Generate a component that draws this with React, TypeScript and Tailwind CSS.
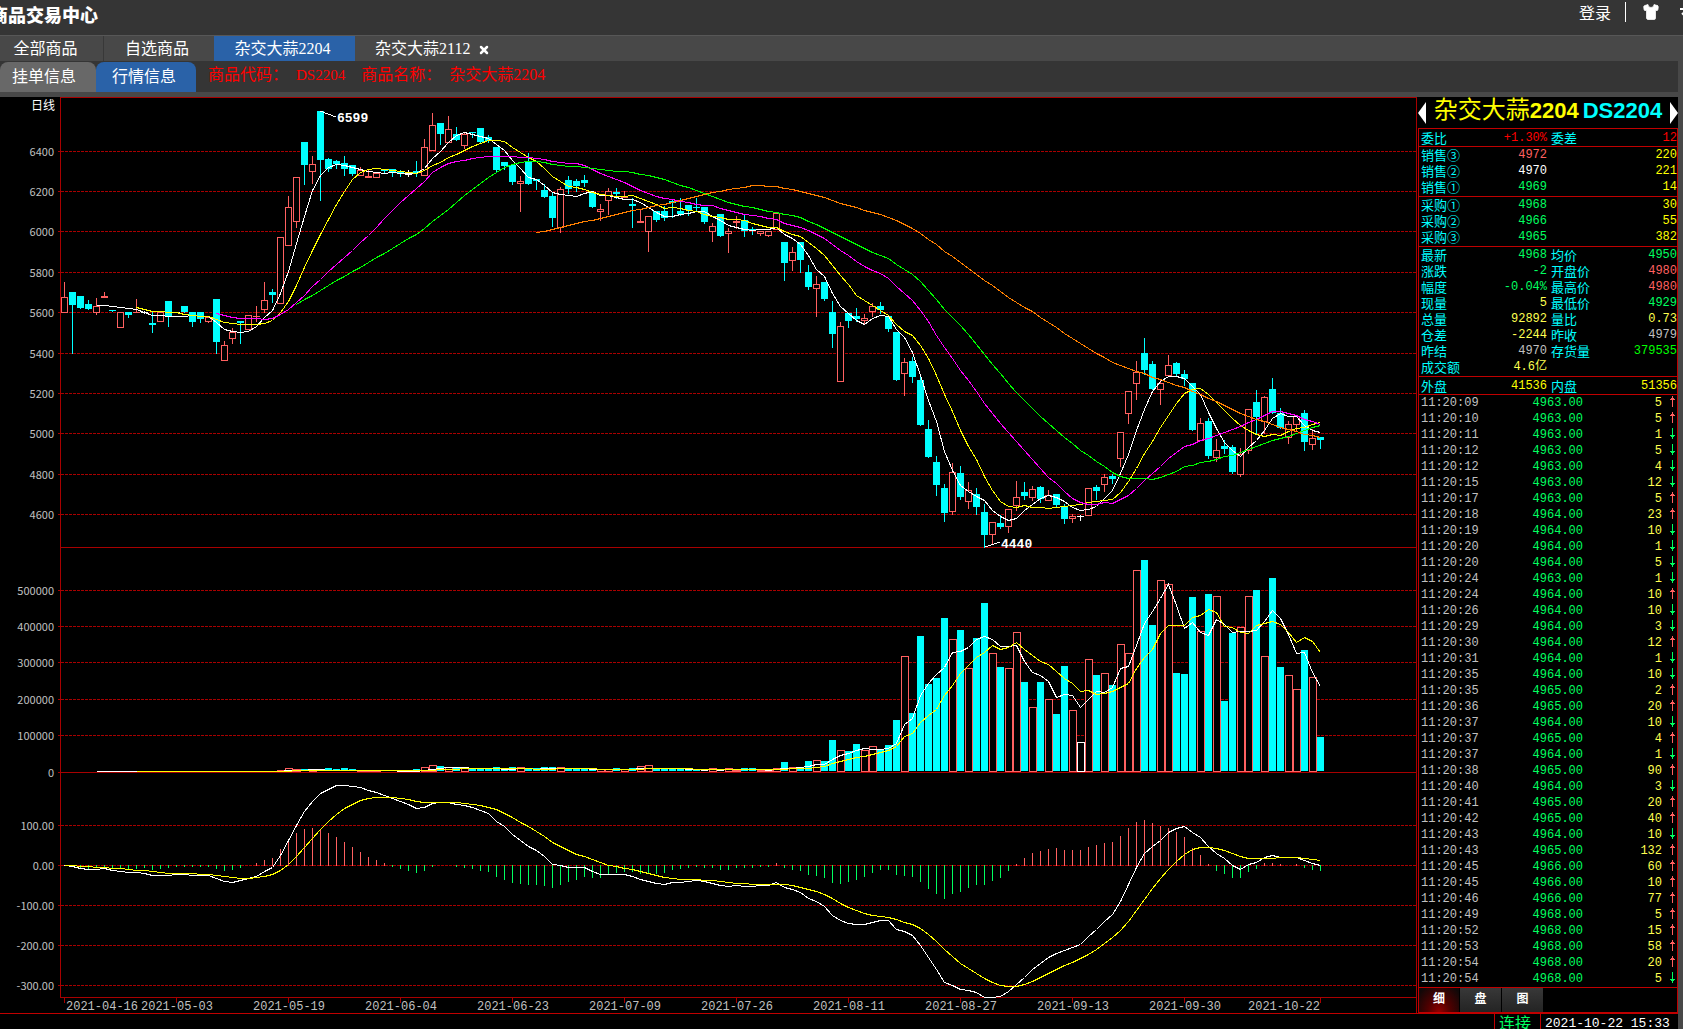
import { Shirt, X } from "lucide-react";
import clsx from "clsx";

const SANS = "font-['Noto_Sans_CJK_SC',sans-serif]";
const SONG = "font-['Liberation_Serif','Noto_Sans_CJK_SC',serif]";
const MONO = "font-['Liberation_Mono','Noto_Sans_CJK_SC',monospace]";

type Kind = "u" | "d" | "w";
// kind (up, down, flat), body top, body bottom, high, low
type Candle = [Kind, number, number, number, number];

const CANDLES: Candle[] = [
  ["u", 297, 313, 282, 313], ["d", 292, 305, 292, 354], ["d", 296, 308, 296, 309], ["d", 304, 309, 300, 310],
  ["u", 306, 313, 298, 315], ["u", 296, 298, 292, 298], ["d", 310, 311, 310, 312], ["u", 312, 328, 312, 328],
  ["d", 312, 315, 312, 318], ["u", 312, 313, 299, 313], ["w", 312, 313, 311, 314], ["d", 323, 325, 312, 333],
  ["u", 312, 322, 312, 322], ["d", 301, 317, 301, 327], ["w", 312, 313, 312, 313], ["d", 306, 312, 306, 313],
  ["d", 312, 322, 312, 327], ["d", 312, 319, 312, 323], ["u", 317, 322, 317, 323], ["d", 299, 342, 299, 354],
  ["u", 345, 361, 341, 361], ["u", 332, 339, 328, 344], ["d", 321, 323, 321, 344], ["u", 315, 330, 315, 330],
  ["u", 316, 317, 306, 322], ["u", 300, 310, 282, 313], ["d", 292, 295, 289, 303], ["u", 237, 304, 237, 304],
  ["u", 207, 246, 196, 246], ["u", 177, 222, 177, 228], ["d", 142, 165, 142, 185], ["u", 164, 172, 156, 184],
  ["d", 111, 160, 111, 201], ["d", 159, 169, 158, 172], ["d", 161, 164, 160, 169], ["d", 163, 169, 156, 176],
  ["d", 165, 174, 165, 176], ["u", 170, 176, 167, 176], ["u", 176, 178, 170, 178], ["u", 173, 178, 173, 178],
  ["d", 169, 171, 169, 173], ["d", 169, 172, 169, 177], ["d", 171, 173, 170, 177], ["w", 174, 175, 170, 177],
  ["d", 171, 173, 161, 177], ["u", 147, 176, 139, 176], ["u", 125, 151, 113, 151], ["d", 123, 134, 123, 145],
  ["u", 129, 143, 116, 143], ["d", 134, 140, 127, 141], ["u", 134, 146, 132, 149], ["d", 132, 133, 132, 138],
  ["d", 128, 142, 128, 143], ["d", 137, 141, 135, 143], ["d", 147, 170, 147, 172], ["d", 162, 166, 162, 170],
  ["d", 165, 182, 165, 185], ["u", 181, 184, 176, 212], ["d", 161, 184, 153, 185], ["d", 179, 181, 179, 190],
  ["d", 190, 197, 184, 198], ["d", 196, 218, 192, 227], ["u", 189, 228, 187, 233], ["d", 180, 189, 176, 194],
  ["d", 181, 186, 179, 192], ["d", 180, 183, 175, 187], ["d", 192, 207, 192, 208], ["u", 209, 212, 204, 221],
  ["u", 191, 201, 188, 215], ["d", 192, 194, 188, 199], ["u", 196, 198, 191, 198], ["d", 204, 206, 198, 228],
  ["u", 221, 223, 210, 223], ["u", 216, 232, 216, 252], ["d", 211, 220, 211, 222], ["d", 211, 218, 206, 221],
  ["d", 201, 203, 200, 218], ["d", 211, 214, 198, 216], ["d", 205, 210, 205, 216], ["d", 207, 208, 198, 211],
  ["d", 207, 222, 207, 224], ["u", 226, 232, 223, 242], ["d", 214, 236, 214, 237], ["u", 231, 234, 228, 253],
  ["u", 221, 223, 216, 229], ["d", 220, 231, 214, 237], ["d", 229, 230, 227, 235], ["u", 231, 234, 231, 236],
  ["u", 231, 236, 231, 237], ["u", 213, 230, 213, 230], ["d", 242, 263, 242, 281], ["u", 252, 261, 247, 271],
  ["d", 242, 260, 242, 273], ["d", 272, 287, 265, 290], ["u", 284, 289, 276, 317], ["d", 282, 299, 282, 301],
  ["d", 312, 334, 301, 348], ["u", 326, 382, 322, 382], ["d", 313, 321, 313, 328], ["d", 316, 319, 308, 322],
  ["u", 318, 321, 314, 324], ["u", 306, 312, 303, 317], ["d", 306, 310, 302, 314], ["d", 316, 329, 316, 332],
  ["d", 332, 380, 332, 381], ["u", 362, 374, 358, 396], ["d", 361, 377, 357, 383], ["d", 380, 425, 376, 426],
  ["d", 429, 457, 420, 458], ["d", 462, 485, 456, 496], ["d", 488, 513, 484, 522], ["u", 472, 512, 463, 515],
  ["d", 473, 497, 466, 500], ["u", 490, 502, 482, 509], ["d", 494, 507, 488, 515], ["d", 512, 535, 504, 548],
  ["u", 522, 535, 522, 545], ["d", 523, 527, 515, 529], ["u", 509, 527, 509, 533], ["u", 497, 506, 481, 511],
  ["d", 492, 496, 482, 500], ["u", 489, 498, 486, 501], ["d", 487, 499, 486, 503], ["u", 495, 501, 490, 501],
  ["d", 494, 505, 494, 507], ["d", 506, 519, 504, 524], ["u", 516, 519, 514, 523], ["w", 516, 517, 515, 521],
  ["u", 488, 516, 488, 516], ["d", 487, 491, 485, 500], ["u", 477, 485, 474, 492], ["d", 476, 479, 474, 484],
  ["u", 432, 459, 432, 467], ["u", 391, 414, 391, 424], ["u", 372, 384, 361, 400], ["d", 353, 370, 338, 375],
  ["d", 364, 389, 361, 390], ["u", 383, 390, 379, 405], ["u", 365, 376, 355, 376], ["d", 363, 374, 362, 376],
  ["d", 374, 379, 370, 386], ["d", 383, 430, 383, 431], ["u", 423, 441, 418, 441], ["d", 421, 456, 418, 459],
  ["u", 450, 458, 439, 462], ["d", 446, 449, 440, 454], ["d", 447, 472, 445, 474], ["u", 454, 475, 448, 477],
  ["u", 409, 451, 409, 454], ["d", 402, 417, 390, 434], ["u", 397, 422, 396, 434], ["d", 389, 413, 378, 414],
  ["d", 413, 428, 408, 429], ["u", 424, 438, 421, 444], ["u", 416, 425, 415, 432], ["d", 413, 442, 410, 451],
  ["u", 438, 445, 429, 450], ["d", 437, 440, 437, 449],
];

const VOLUMES = [
  1, 1, 1, 1, 1, 1, 1, 1, 1, 1, 1, 1, 1, 1, 1, 1, 1, 1, 1, 1, 1, 1, 1, 1, 1, 1, 1, 2, 4, 3,
  2, 2, 2, 3, 2, 3, 2, 2, 2, 2, 1, 1, 1, 1, 2, 5, 7, 5, 5, 4, 5, 3, 3, 3, 4, 2, 4, 5, 3, 3,
  4, 4, 5, 3, 3, 3, 3, 3, 3, 3, 3, 3, 6, 7, 3, 3, 3, 3, 2, 2, 2, 4, 2, 4, 2, 3, 3, 2, 2, 4,
  9, 5, 4, 10, 12, 10, 31, 22, 20, 27, 22, 26, 21, 26, 51, 116, 58, 135, 87, 93, 153, 133, 141, 104, 133,
  168, 119, 104, 104, 140, 89, 65, 89, 73, 57, 105, 62, 30, 113, 96, 99, 86, 128, 119, 202, 211, 146, 192,
  188, 98, 97, 174, 141, 177, 176, 70, 138, 145, 176, 181, 116, 193, 104, 97, 83, 121, 95, 34,
];

const PRICE_GRID: [number, string][] = [
  [151, "6400"], [191, "6200"], [231, "6000"], [272, "5800"], [312, "5600"],
  [353, "5400"], [393, "5200"], [433, "5000"], [474, "4800"], [514, "4600"],
];
const VOLUME_GRID: [number, string][] = [
  [590, "500000"], [626, "400000"], [662, "300000"], [699, "200000"], [735, "100000"],
];
const MACD_GRID: [number, string][] = [
  [825, "100.00"], [865, "0.00"], [905, "-100.00"], [945, "-200.00"], [985, "-300.00"],
];
const DATES: [number, string][] = [
  [14, "2021-05-03"], [28, "2021-05-19"], [42, "2021-06-04"], [56, "2021-06-23"], [70, "2021-07-09"],
  [84, "2021-07-26"], [98, "2021-08-11"], [112, "2021-08-27"], [126, "2021-09-13"], [140, "2021-09-30"],
];

const COLORS: Record<Kind, string> = { u: "#ff6060", d: "#00ffff", w: "#ffffff" };
const LINE = "#a80000";
const CHART_TOP = 97;
const VOLUME_BASE = 772;
const MACD_ZERO = 865;
// the MACD pane has about twice the pixels per yuan of the price pane
const MACD_SCALE = 1.983;

const cx = (i: number) => 64 + i * 8;
const closes = CANDLES.map(([kind, top, bottom]) => (kind === "d" ? bottom : top));

function average(values: number[], size: number) {
  return values
    .map((_, i) => {
      if (i < size - 1) return null;
      const sum = values.slice(i - size + 1, i + 1).reduce((a, b) => a + b, 0);
      return [i, sum / size] as const;
    })
    .filter((p) => p !== null);
}

function ema(values: number[], size: number) {
  const k = 2 / (size + 1);
  const out = [values[0]];
  for (let i = 1; i < values.length; i++) out.push(values[i] * k + out[i - 1] * (1 - k));
  return out;
}

// screen y grows downwards, so the closes are negated before the MACD
const rising = closes.map((y) => -y * MACD_SCALE);
const slow = ema(rising, 26);
const dif = ema(rising, 12).map((v, i) => v - slow[i]);
const dea = ema(dif, 9);

function Curve({ points, color }: { points: (readonly [number, number])[]; color: string }) {
  return (
    <polyline
      points={points.map(([i, y]) => `${cx(i) + 0.5},${Math.round(y) + 0.5}`).join(" ")}
      fill="none"
      stroke={color}
    />
  );
}

function Grid({ rows }: { rows: [number, string][] }) {
  return (
    <>
      {rows.map(([y, label]) => (
        <g key={label}>
          <line x1="58" x2="61" y1={y + 0.5} y2={y + 0.5} stroke={LINE} />
          <line x1="61" x2="100%" y1={y + 0.5} y2={y + 0.5} stroke={LINE} strokeDasharray="3 1" />
          <text x="54" y={y + 5} textAnchor="end" fontSize="11" fill="#c0c0c0">
            {label}
          </text>
        </g>
      ))}
    </>
  );
}

function CandleShape({ candle, index }: { candle: Candle; index: number }) {
  const [kind, top, bottom, high, low] = candle;
  const x = cx(index);
  const color = COLORS[kind];
  return (
    <g>
      <line x1={x + 0.5} x2={x + 0.5} y1={high} y2={low} stroke={color} />
      {kind === "u" && bottom - top > 2 ? (
        <rect x={x - 2.5} y={top + 0.5} width="6" height={bottom - top - 1} fill="#000000" stroke={color} />
      ) : (
        <rect x={x - 3} y={top} width="7" height={bottom - top} fill={color} />
      )}
    </g>
  );
}

function VolumeBar({ height, kind, index }: { height: number; kind: Kind; index: number }) {
  if (height < 2) return null;
  const x = cx(index);
  if (kind === "d") {
    return <rect x={x - 3} y={VOLUME_BASE - height - 1} width="7" height={height} fill={COLORS.d} />;
  }
  return (
    <rect
      x={x - 2.5}
      y={VOLUME_BASE - height + 0.5}
      width="7"
      height={height - 1}
      fill="#000000"
      stroke={COLORS[kind]}
    />
  );
}

function Chart() {
  const lineY = (values: number[], base: number) => values.map((v, i) => [i, base - v] as const);
  return (
    <svg className={clsx("block h-[916px] w-full bg-black", SANS)} shapeRendering="crispEdges" role="img" aria-label="日线">
      <g transform={`translate(0 ${-CHART_TOP})`}>
        <text x="55" y="110" textAnchor="end" fontSize="12" fill="#ffffff">
          日线
        </text>
        <Grid rows={PRICE_GRID} />
        <Grid rows={VOLUME_GRID} />
        <Grid rows={MACD_GRID} />

        {/* Pane frames */}
        <line x1="60" x2="100%" y1="97.5" y2="97.5" stroke={LINE} />
        <line x1="60" x2="100%" y1="547.5" y2="547.5" stroke={LINE} />
        <line x1="58" x2="100%" y1="772.5" y2="772.5" stroke={LINE} />
        <line x1="60" x2="100%" y1="997.5" y2="997.5" stroke={LINE} />
        <line x1="60.5" x2="60.5" y1="97" y2="998" stroke={LINE} />
        <text x="54" y="777" textAnchor="end" fontSize="11" fill="#c0c0c0">
          0
        </text>

        {/* Price */}
        {CANDLES.map((candle, i) => (
          <CandleShape key={i} candle={candle} index={i} />
        ))}
        <Curve points={average(closes, 5)} color="#ffffff" />
        <Curve points={average(closes, 10)} color="#ffff00" />
        <Curve points={average(closes, 20)} color="#ff00ff" />
        <Curve points={average(closes, 30)} color="#00ff00" />
        <Curve points={average(closes, 60)} color="#ff8000" />
        <polyline points="320,111 336,117" fill="none" stroke="#ffffff" />
        <polyline points="985,547 1000,542" fill="none" stroke="#ffffff" />
        <g className={MONO} fontSize="13" fontWeight="700" fill="#ffffff">
          <text x="337" y="122">6599</text>
          <text x="1001" y="548">4440</text>
        </g>

        {/* Volume */}
        {VOLUMES.map((height, i) => (
          <VolumeBar key={i} height={height} kind={CANDLES[i][0]} index={i} />
        ))}
        <Curve points={average(VOLUMES.map((v) => VOLUME_BASE - v), 5)} color="#ffffff" />
        <Curve points={average(VOLUMES.map((v) => VOLUME_BASE - v), 10)} color="#ffff00" />

        {/* MACD */}
        {dif.map((value, i) => {
          const height = Math.round(Math.abs(value - dea[i]));
          if (height < 1) return null;
          const up = value > dea[i];
          return (
            <rect
              key={i}
              x={cx(i)}
              y={up ? MACD_ZERO - height : MACD_ZERO}
              width="1"
              height={height + 1}
              fill={up ? "#ff6060" : "#00ff60"}
            />
          );
        })}
        <Curve points={lineY(dif, MACD_ZERO)} color="#ffffff" />
        <Curve points={lineY(dea, MACD_ZERO)} color="#ffff00" />

        {/* Dates */}
        <g className={MONO} fontSize="12" fill="#c0c0c0">
          {[0, ...DATES.map(([i]) => i), 157].map((i) => (
            <line key={i} x1={cx(i) + 0.5} x2={cx(i) + 0.5} y1="998" y2="1003" stroke={LINE} />
          ))}
          <text x="66" y="1010">2021-04-16</text>
          {DATES.map(([i, label]) => (
            <text key={label} x={cx(i) + 1} y="1010" textAnchor="middle">
              {label}
            </text>
          ))}
          <text x="1320" y="1010" textAnchor="end">2021-10-22</text>
        </g>
      </g>
    </svg>
  );
}

const RED = "text-[#ff6060]";
const GREEN = "text-[#00ff60]";
const YELLOW = "text-[#ffff50]";
const GRAY = "text-[#c0c0c0]";
const WHITE = "text-white";

// label, value, value colour, second label, second value, its colour
type QuoteRow = [string, string, string, string, string, string];

const QUOTES: QuoteRow[][] = [
  [["委比", "+1.30%", "text-[#ff0000]", "委差", "12", "text-[#ff0000]"]],
  [
    ["销售③", "4972", RED, "", "220", "text-[#ffff00]"],
    ["销售②", "4970", WHITE, "", "221", "text-[#ffff00]"],
    ["销售①", "4969", GREEN, "", "14", "text-[#ffff00]"],
  ],
  [
    ["采购①", "4968", GREEN, "", "30", "text-[#ffff00]"],
    ["采购②", "4966", GREEN, "", "55", "text-[#ffff00]"],
    ["采购③", "4965", GREEN, "", "382", "text-[#ffff00]"],
  ],
  [
    ["最新", "4968", GREEN, "均价", "4950", GREEN],
    ["涨跌", "-2", GREEN, "开盘价", "4980", RED],
    ["幅度", "-0.04%", GREEN, "最高价", "4980", RED],
    ["现量", "5", YELLOW, "最低价", "4929", GREEN],
    ["总量", "92892", YELLOW, "量比", "0.73", YELLOW],
    ["仓差", "-2244", YELLOW, "昨收", "4979", GRAY],
    ["昨结", "4970", GRAY, "存货量", "379535", "text-[#00ff00]"],
    ["成交额", "4.6亿", YELLOW, "", "", YELLOW],
  ],
  [["外盘", "41536", "text-[#ffff00]", "内盘", "51356", "text-[#ffff00]"]],
];

// seconds after 11:20, price, volume, rising
const TRADES: [string, number, number, boolean][] = [
  ["09", 4963, 5, true], ["10", 4963, 5, true], ["11", 4963, 1, false], ["12", 4963, 5, false],
  ["12", 4963, 4, false], ["15", 4963, 12, false], ["17", 4963, 5, true], ["18", 4964, 23, true],
  ["19", 4964, 10, false], ["20", 4964, 1, false], ["20", 4964, 5, false], ["24", 4963, 1, false],
  ["24", 4964, 10, true], ["26", 4964, 10, false], ["29", 4964, 3, false], ["30", 4964, 12, true],
  ["31", 4964, 1, false], ["35", 4964, 10, false], ["35", 4965, 2, true], ["36", 4965, 20, true],
  ["37", 4964, 10, false], ["37", 4965, 4, true], ["37", 4964, 1, false], ["38", 4965, 90, true],
  ["40", 4964, 3, false], ["41", 4965, 20, true], ["42", 4965, 40, true], ["43", 4964, 10, false],
  ["43", 4965, 132, true], ["45", 4966, 60, true], ["45", 4966, 10, true], ["46", 4966, 77, true],
  ["49", 4968, 5, true], ["52", 4968, 15, true], ["53", 4968, 58, true], ["54", 4968, 20, true],
  ["54", 4968, 5, false],
];

function TradeArrow({ up }: { up: boolean }) {
  return (
    <svg width="5" height="14" className="ml-auto block" shapeRendering="crispEdges" fill={up ? "#ff6060" : "#00ff60"}>
      {up ? (
        <path d="M2 0h1v11h-1zM1 2h3v1h-3zM0 3h5v1h-5z" />
      ) : (
        <path d="M2 0h1v11h-1zM1 8h3v1h-3zM0 7h5v1h-5z" />
      )}
    </svg>
  );
}

function QuoteSection({ rows }: { rows: QuoteRow[] }) {
  return (
    <div className={clsx("border-t border-[#c00000]", rows.length > 1 && "pb-px")}>
      <table className="w-full table-fixed text-xs">
        <tbody>
          {rows.map(([label, value, color, label2, value2, color2]) => (
            <tr key={label} className={rows.length === 1 ? "h-[17px]" : "h-4"}>
              <th className={clsx("w-[50px] whitespace-nowrap p-0 pl-0.5 text-left text-[13px] leading-4 font-normal text-[#00ffff]", SANS)}>
                {label}
              </th>
              <td className={clsx("w-[78px] p-0 text-right leading-4", color)}>{value}</td>
              <th className={clsx("w-[46px] whitespace-nowrap p-0 pl-1 text-left text-[13px] leading-4 font-normal text-[#00ffff]", SANS)}>
                {label2}
              </th>
              <td className={clsx("p-0 text-right leading-4", color2)}>{value2}</td>
            </tr>
          ))}
        </tbody>
      </table>
    </div>
  );
}

function QuotePanel() {
  return (
    <aside className={clsx("flex w-[260px] shrink-0 flex-col bg-black", MONO)}>
      <div className="flex h-[31px] items-center justify-between font-['Liberation_Sans','Noto_Sans_CJK_SC',sans-serif]">
        <button aria-label="上一个">
          <svg width="8" height="22" fill="#ffffff">
            <path d="M8 0v22L0 11z" />
          </svg>
        </button>
        <h1 className="flex items-center gap-1 whitespace-nowrap pb-1 text-[22px] leading-6 font-bold">
          <span className="text-[#ffff00]">
            <span className="text-2xl leading-6 font-normal">杂交大蒜</span>2204
          </span>
          <span className="text-[#00ffff]">DS2204</span>
        </h1>
        <button aria-label="下一个">
          <svg width="8" height="22" fill="#ffffff">
            <path d="M0 0v22l8-11z" />
          </svg>
        </button>
      </div>

      <div className="flex flex-1 flex-col border-x border-b border-[#c00000]">
        {QUOTES.map((rows) => (
          <QuoteSection key={rows[0][0]} rows={rows} />
        ))}

        <div className="border-y border-[#c00000]">
          <table className="w-full table-fixed text-xs">
            <tbody>
              {TRADES.map(([second, price, volume, up], i) => (
                <tr key={i} className="h-4">
                  <td className={clsx("w-20 p-0 pl-0.5 leading-4", GRAY)}>11:20:{second}</td>
                  <td className={clsx("w-[84px] p-0 text-right leading-4", GREEN)}>{price}.00</td>
                  <td className={clsx("w-[79px] p-0 text-right leading-4", YELLOW)}>{volume}</td>
                  <td className="p-0 pr-0.5">
                    <TradeArrow up={up} />
                  </td>
                </tr>
              ))}
            </tbody>
          </table>
        </div>

        <div className={clsx("flex flex-1 gap-px text-xs font-bold text-white", SANS)}>
          <button className="w-10 bg-[radial-gradient(ellipse_at_bottom,#900000_0%,#500000_40%,#100808_90%)] pb-1">细</button>
          <button className="w-[41px] bg-gradient-to-b from-[#383838] to-[#242424] pb-1">盘</button>
          <button className="w-[41px] bg-gradient-to-b from-[#383838] to-[#242424] pb-1">图</button>
        </div>
      </div>
    </aside>
  );
}

function Header() {
  return (
    <header className="flex h-9 shrink-0 items-start justify-between overflow-hidden border-b border-[#575757] bg-[#353535] text-white">
      <div className={clsx("-ml-[10px] pt-0.5 text-lg leading-6 font-black", SANS)}>商品交易中心</div>
      <div className="flex items-center pt-px">
        <button className={clsx("text-base leading-[22px]", SANS)}>登录</button>
        <span className="ml-3.5 h-5 w-px bg-white" />
        <button aria-label="换肤" className="ml-4">
          <Shirt className="h-[18px] w-[18px]" fill="#ffffff" strokeWidth={1} />
        </button>
        <button aria-label="菜单" className="ml-5 w-[3px] overflow-hidden">
          <svg width="16" height="16" fill="none" stroke="#ffffff" strokeWidth="2">
            <path d="M0 5h12M2 9l3 3 3-3" />
          </svg>
        </button>
      </div>
    </header>
  );
}

function Tabs() {
  return (
    <nav className={clsx("flex h-[25px] shrink-0 bg-[#484848] text-base leading-[25px] text-white", SONG)}>
      <button className="w-[104px] border-r border-[#383838] pr-4 pl-1">全部商品</button>
      <button className="w-[110px] pr-1">自选商品</button>
      <button className="w-[141px] bg-[#2a62a8]">杂交大蒜2204&nbsp;</button>
      <button className="flex items-center gap-2 pl-5">
        杂交大蒜2112
        <X className="mt-0.5 h-3 w-3" strokeWidth={5} />
      </button>
    </nav>
  );
}

function SubTabs() {
  return (
    <div className={clsx("mr-[5px] flex h-[31px] shrink-0 bg-[#353535] pt-px text-base text-white", SONG)}>
      <button className="w-24 rounded-t-lg bg-[#686868] pr-2">挂单信息</button>
      <button className="w-[100px] rounded-t-lg bg-[#2a62a8] pr-1">行情信息</button>
      <p className="flex items-start pl-3 leading-[26px] whitespace-nowrap text-[#ff0000]">
        <span>商品代码：</span>
        <span className="ml-2 text-[15px]">DS2204</span>
        <span className="ml-4">商品名称：</span>
        <span className="ml-2">杂交大蒜2204</span>
      </p>
    </div>
  );
}

export default function App() {
  return (
    <div className="flex h-screen flex-col overflow-hidden bg-[#484848]">
      <Header />
      <Tabs />
      <SubTabs />
      <main className="mt-[5px] mr-[5px] flex shrink-0 gap-px bg-black">
        <div className="min-w-0 flex-1 border-r border-[#a80000]">
          <Chart />
        </div>
        <QuotePanel />
      </main>
      <footer className={clsx("mr-[5px] flex h-6 shrink-0 justify-end border-t border-[#c00000] bg-black text-base leading-5", SONG)}>
        <span className="w-[46px] border-l border-[#c00000] pl-1 text-[#00ff60]">连接</span>
        <time className={clsx("w-[138px] border-l border-[#c00000] pl-1 text-[13px] text-white", MONO)}>2021-10-22 15:33</time>
      </footer>
    </div>
  );
}
